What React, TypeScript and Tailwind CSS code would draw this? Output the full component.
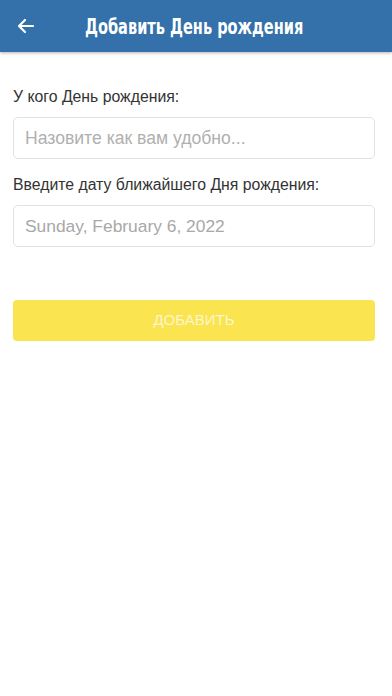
import React from "react";

export default function App() {
  return (
    <div className="w-[392px] h-[696px] bg-white font-['Liberation_Sans',sans-serif]">
      <div className="h-[52px] bg-[#3470a9] flex items-center shadow-[0_1px_3px_rgba(0,0,0,0.3)]">
        <div className="w-[50px] flex justify-center pl-[1px]">
          <svg width="18" height="16" viewBox="0 0 18 16" fill="none" stroke="white" strokeWidth="2.2" strokeLinecap="round" strokeLinejoin="round">
            <path d="M16 8H2M8 2L2 8l6 6" />
          </svg>
        </div>
        <div className="ml-[35px] text-white text-[22px] font-bold whitespace-nowrap origin-left scale-x-[0.735] font-['DejaVu_Sans_Condensed','DejaVu_Sans',sans-serif]">
          Добавить День рождения
        </div>
      </div>
      <div className="pl-[13px] pr-[17px] pt-[36px] flex flex-col">
        <div className="text-[15.8px] text-[#333] leading-[18px]">У кого День рождения:</div>
        <div className="mt-[11px] h-[42px] border border-[#e2e2e2] rounded-[5px] flex items-center px-[11px] text-[17.6px] text-[#b0b0b0]">
          Назовите как вам удобно...
        </div>
        <div className="mt-[17px] text-[15.8px] text-[#333] leading-[18px]">Введите дату ближайшего Дня рождения:</div>
        <div className="mt-[11px] h-[42px] border border-[#e2e2e2] rounded-[5px] flex items-center px-[11px] text-[17.4px] text-[#a8a8a8]">
          Sunday, February 6, 2022
        </div>
        <div className="mt-[53px] h-[41px] bg-[#fae44f] rounded-[4px] flex items-center justify-center text-[15px] text-[#fdf6cc]">
          ДОБАВИТЬ
        </div>
      </div>
    </div>
  );
}
